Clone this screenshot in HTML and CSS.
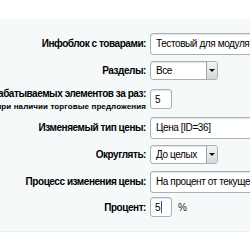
FILE: index.html
```html
<!DOCTYPE html>
<html lang="ru">
    <head>
        <meta charset="UTF-8">
        <title>Изменение цен</title>
        <link rel="stylesheet" href="styles.css">
    </head>
    <body>
        <div class="top"></div>
        <div class="panel">
            <div class="row">
                <div class="label">Инфоблок с товарами:</div>
                <div class="field"><span class="box wide">Тестовый для модуля [ID=2]</span></div>
            </div>
            <div class="row">
                <div class="label">Разделы:</div>
                <div class="field"><span class="box select">Все<span class="arrow"></span></span></div>
            </div>
            <div class="row tall">
                <div class="label">
                    <span>Количество обрабатываемых элементов за раз:</span>
                    <span class="note">Не работает при наличии торговые предложения</span>
                </div>
                <div class="field"><span class="box small">5</span></div>
            </div>
            <div class="row">
                <div class="label">Изменяемый тип цены:</div>
                <div class="field"><span class="box wide">Цена [ID=36]</span></div>
            </div>
            <div class="row">
                <div class="label">Округлять:</div>
                <div class="field"><span class="box select">До целых<span class="arrow"></span></span></div>
            </div>
            <div class="row">
                <div class="label">Процесс изменения цены:</div>
                <div class="field"><span class="box wide">На процент от текущей цены</span></div>
            </div>
            <div class="row last">
                <div class="label">Процент:</div>
                <div class="field"><span class="box small focus">5<span class="caret"></span></span><span class="unit">%</span></div>
            </div>
        </div>
    </body>
</html>
```

FILE: styles.css
```css
body {
    margin: 0;
    background: #fff;
    font-family: "Liberation Sans", Arial, sans-serif;
    color: #000;
    overflow: hidden;
}
.top {
    height: 19px;
}
.panel {
    background: #f5f9f9;
    padding: 11px 0 12px 0;
    border-bottom: 1px solid #e8eff1;
    box-shadow: 0 1px 0 #dbe5e8;
}
.row {
    display: grid;
    grid-template-columns: 146px 1fr;
    column-gap: 4px;
    height: 27px;
    align-items: center;
}
.row.tall {
    height: 30px;
}
.row.last {
    height: 24px;
}
.label {
    display: flex;
    flex-direction: column;
    align-items: flex-end;
    white-space: nowrap;
    font-size: 10px;
    font-weight: bold;
    letter-spacing: -0.45px;
}
.note {
    font-size: 8px;
    letter-spacing: 0.1px;
    margin-top: 3px;
}
.field {
    display: flex;
    align-items: center;
    white-space: nowrap;
    font-size: 10px;
    letter-spacing: -0.4px;
}
.box {
    display: flex;
    align-items: center;
    box-sizing: border-box;
    height: 20px;
    padding: 0 5px;
    background: #fff;
    border: 1px solid #a7b2b6;
    border-radius: 3px;
    box-shadow: inset 0 1px 1px #e2e6e8;
}
.box.wide {
    width: 120px;
    height: 22px;
}
.box.select {
    width: 68px;
    height: 19px;
    padding-right: 0;
    justify-content: space-between;
}
.box.small {
    width: 22px;
    padding: 0 4px;
}
.arrow {
    position: relative;
    width: 10px;
    height: 17px;
    border-left: 1px solid #9aa5a9;
    border-radius: 0 2px 2px 0;
    background: linear-gradient(#f4f4f4, #d6d8d9);
}
.arrow::after {
    content: "";
    position: absolute;
    left: 2px;
    top: 7px;
    border-left: 3px solid transparent;
    border-right: 3px solid transparent;
    border-top: 3px solid #111;
}
.caret {
    width: 1px;
    height: 12px;
    margin-left: 1px;
    background: #3a4f8c;
}
.unit {
    margin-left: 6px;
    color: #222;
}
```
